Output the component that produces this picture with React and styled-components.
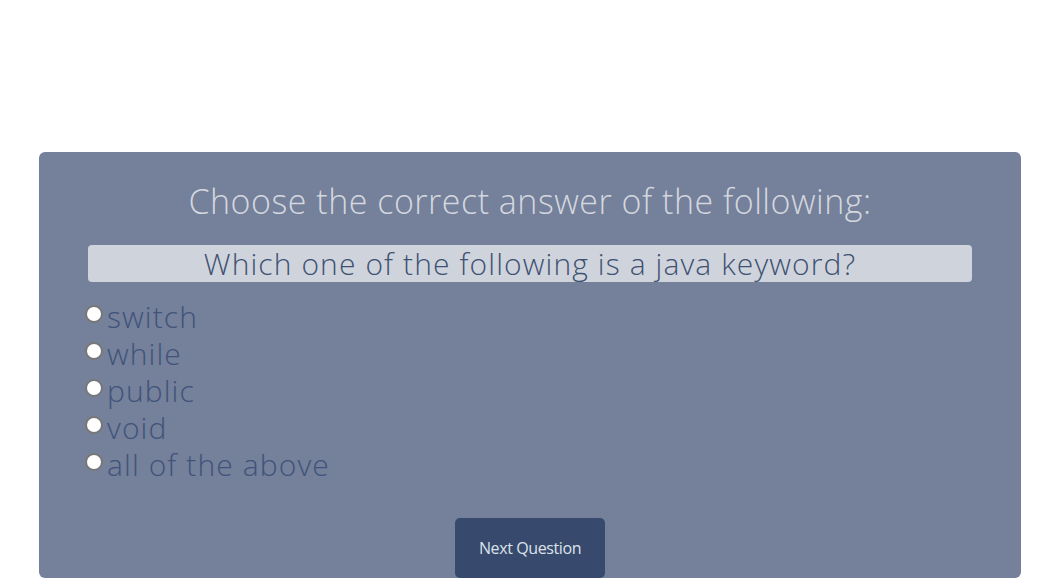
import React from "react";
import styled, { createGlobalStyle } from "styled-components";

const Global = createGlobalStyle`
  html, body { margin: 0; padding: 0; background: #ffffff; }
  body { font-family: "Open Sans", "Liberation Sans", sans-serif; }
`;

const Page = styled.div`
  padding: 152px 0 0 39px;
  height: 582px;
  box-sizing: border-box;
  overflow: hidden;
`;

const Card = styled.div`
  width: 982px;
  height: 426px;
  box-sizing: border-box;
  background: #75809a;
  border-radius: 6px;
  padding: 26px 49px 0 49px;
  display: flex;
  flex-direction: column;
`;

const Title = styled.h2`
  margin: 0;
  text-align: center;
  font-family: "Open Sans", sans-serif;
  font-weight: 300;
  font-size: 34px;
  line-height: 46px;
  color: #d3d7df;
  letter-spacing: 0.5px;
`;

const QuestionBox = styled.div`
  margin-top: 21px;
  height: 37px;
  background: #cfd4dc;
  border-radius: 4px;
  display: flex;
  align-items: center;
  justify-content: center;
  font-family: "Open Sans", sans-serif;
  font-weight: 300;
  font-size: 30px;
  color: #3f5173;
  letter-spacing: 1.1px;
`;

const Options = styled.div`
  margin-top: 16px;
  display: flex;
  flex-direction: column;
`;

const Option = styled.label`
  display: flex;
  align-items: center;
  height: 37px;
  font-family: "Open Sans", sans-serif;
  font-weight: 300;
  font-size: 30px;
  color: #40537a;
  letter-spacing: 1.1px;
`;

const Radio = styled.input.attrs({ type: "radio", name: "answer" })`
  appearance: none;
  -webkit-appearance: none;
  display: block;
  width: 18px;
  height: 18px;
  min-width: 18px;
  margin: 0 4px 0 -3px;
  padding: 0;
  border-radius: 50%;
  background: #ffffff;
  border: 2px solid #777777;
  box-sizing: border-box;
  flex: none;
  position: relative;
  top: -3px;
`;

const ButtonRow = styled.div`
  margin-top: auto;
  display: flex;
  justify-content: center;
`;

const NextButton = styled.button`
  width: 150px;
  height: 60px;
  background: #374a6d;
  color: #dde2ea;
  border: none;
  border-radius: 5px;
  font-family: "Open Sans", sans-serif;
  font-size: 16px;
  font-weight: 400;
  letter-spacing: -0.4px;
`;

const answers = ["switch", "while", "public", "void", "all of the above"];

export default function App() {
  return (
    <>
      <Global />
      <Page>
        <Card>
          <Title>Choose the correct answer of the following:</Title>
          <QuestionBox>Which one of the following is a java keyword?</QuestionBox>
          <Options>
            {answers.map((a) => (
              <Option key={a}>
                <Radio value={a} />
                {a}
              </Option>
            ))}
          </Options>
          <ButtonRow>
            <NextButton>Next Question</NextButton>
          </ButtonRow>
        </Card>
      </Page>
    </>
  );
}
